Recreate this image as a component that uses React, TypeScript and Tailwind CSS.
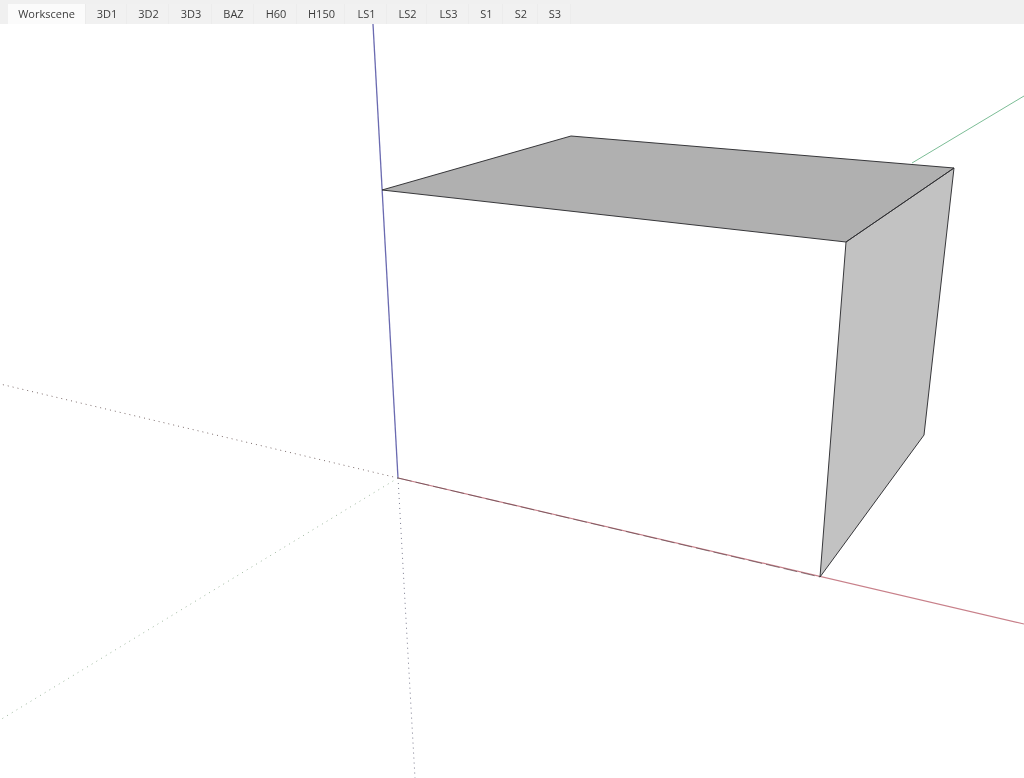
const tabs: [string, string][] = [
  ["3D1", "w-[41px]"],
  ["3D2", "w-[42px]"],
  ["3D3", "w-[43px]"],
  ["BAZ", "w-[42px]"],
  ["H60", "w-[43px]"],
  ["H150", "w-[48px]"],
  ["LS1", "w-[42px]"],
  ["LS2", "w-[40px]"],
  ["LS3", "w-[42px]"],
  ["S1", "w-[34px]"],
  ["S2", "w-[35px]"],
  ["S3", "w-[33px]"],
];

function Scene() {
  return (
    <svg className="block w-full h-full blur-[0.35px]" viewBox="0 24 1024 754" width="1024" height="754">
      <polygon points="382,190 571,136 954,168 846,242" fill="#b0b0b0" />
      <polygon points="846,242 954,168 924,435 820,577" fill="#c2c2c2" />
      <line x1="373" y1="24" x2="398" y2="478" stroke="#6a6ab0" strokeWidth="1.3" />
      <line x1="398" y1="478" x2="1024" y2="624" stroke="#c8808a" strokeWidth="1.1" />
      <line x1="398" y1="478" x2="820" y2="577" stroke="#4a3a40" strokeWidth="0.6" strokeDasharray="14 4" />
      <line x1="912" y1="163" x2="1024" y2="96" stroke="#7cbd96" strokeWidth="1" />
      <line x1="398" y1="478" x2="0" y2="384" stroke="#7a6a6a" strokeWidth="1" strokeDasharray="1 4" />
      <line x1="398" y1="478" x2="0" y2="720" stroke="#9ab59b" strokeWidth="1" strokeDasharray="1 4.5" />
      <line x1="398" y1="478" x2="415" y2="778" stroke="#77778a" strokeWidth="1" strokeDasharray="1 4" />
      <g stroke="#2e2e32" strokeWidth="0.95" fill="none" strokeLinejoin="round">
        <polygon points="382,190 571,136 954,168 846,242" />
        <polygon points="846,242 954,168 924,435 820,577" />
      </g>
    </svg>
  );
}

export default function App() {
  return (
    <div className="w-[1024px] h-[778px] bg-white flex flex-col overflow-hidden font-['Open_Sans','Noto_Sans',sans-serif] text-[11px] text-[#3c3c3c]">
      <div className="h-6 shrink-0 bg-[#f0f0f0] flex items-end pl-2 blur-[0.25px]">
        <div className="w-[78px] h-[20px] bg-[#fbfbfb] flex items-center justify-center border-r border-[#ebebeb]">
          Workscene
        </div>
        {tabs.map(([label, width]) => (
          <div
            key={label}
            className={`${width} h-[20px] bg-[#f1f1f1] flex items-center justify-center pl-[2px] pt-px border-r border-[#ececec]`}
          >
            {label}
          </div>
        ))}
      </div>
      <div className="flex-1 min-h-0">
        <Scene />
      </div>
    </div>
  );
}
